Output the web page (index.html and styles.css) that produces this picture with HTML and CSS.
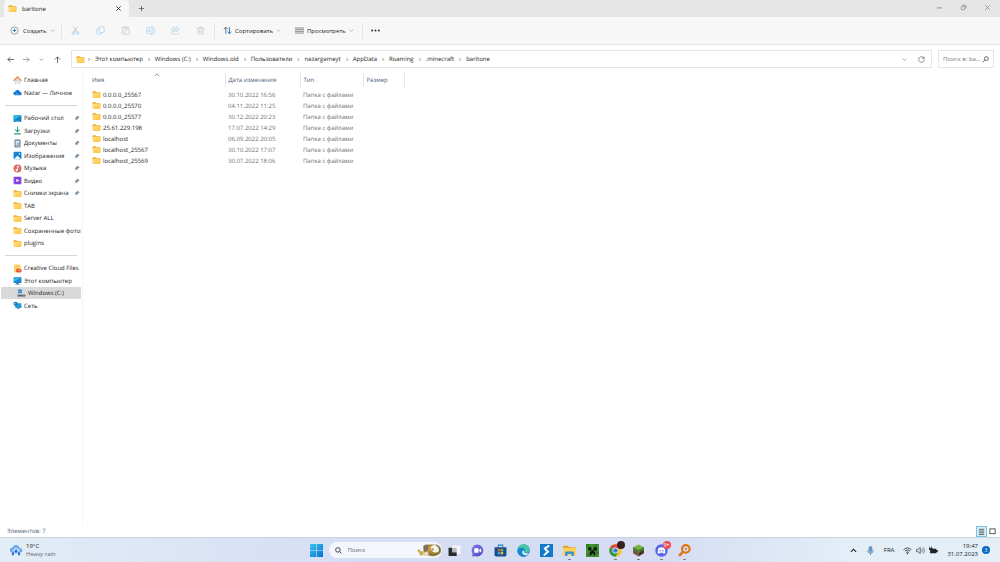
FILE: index.html
```html
<!DOCTYPE html>
<html lang="ru">
<head>
    <meta charset="UTF-8">
    <meta name="viewport" content="width=device-width, initial-scale=1.0">
    <title>baritone</title>
    <link rel="stylesheet" href="styles.css">
</head>
<body>
    <svg class="sprite" aria-hidden="true">
        <linearGradient id="gFolder" x1="0" y1="0" x2="1" y2="1"><stop offset="0" stop-color="#ffe08a"/><stop offset="1" stop-color="#fcc43c"/></linearGradient>
        <linearGradient id="gWin" x1="0" y1="0" x2="1" y2="1"><stop offset="0" stop-color="#3cc4f5"/><stop offset="1" stop-color="#0872cf"/></linearGradient>
        <linearGradient id="gEdge" x1="0" y1="0" x2="1" y2="1"><stop offset="0" stop-color="#2bb6e8"/><stop offset="1" stop-color="#0c59a4"/></linearGradient>
        <linearGradient id="gChat" x1="0" y1="0" x2="1" y2="1"><stop offset="0" stop-color="#7f7bf0"/><stop offset="1" stop-color="#5040b4"/></linearGradient>
        <symbol id="folder" viewBox="0 0 16 16"><path d="M1 3.500Q1 2 2.500 2H6l2 2h5.500Q15 4 15 5.500V8H1z" fill="#eba71c"/><rect x="1" y="5" width="14" height="9" rx="1.200" fill="url(#gFolder)"/></symbol>
        <symbol id="chevron" viewBox="0 0 8 8"><path d="M3 1.500L5.500 4 3 6.500" fill="none" stroke="currentColor" stroke-width="1.200"/></symbol>
        <symbol id="down" viewBox="0 0 8 8"><path d="M1 2.500l3 3 3-3" fill="none" stroke="currentColor"/></symbol>
        <symbol id="up" viewBox="0 0 8 8"><path d="M1 5.500l3-3 3 3" fill="none" stroke="currentColor" stroke-width="1.200"/></symbol>
        <symbol id="close" viewBox="0 0 8 8"><path d="M1.500 1.500l5 5M6.500 1.500l-5 5" fill="none" stroke="currentColor" stroke-width=".9"/></symbol>
        <symbol id="pin" viewBox="0 0 12 12"><path d="M7 1l4 4-1 .8-.7-.2L7.200 7.700 7 9.500 5.800 10.200 3.900 8.300 1.500 11l-.5-.5L3.400 8 1.800 6.200 2.500 5l1.800-.2 2.100-2.100L6.200 2z" fill="#7b8b98"/></symbol>
        <symbol id="monitor" viewBox="0 0 16 16"><rect x="1" y="2" width="14" height="10.500" rx="1" fill="#1687ce"/><path d="M2 3h12L2 10z" fill="#37b7e9"/><path d="M6 12h4v2h2v1H4v-1h2z" fill="#2a6594"/></symbol>
    </svg>

    <div class="window">
        <header class="titlebar">
            <div class="tab">
                <svg class="icon"><use href="#folder"/></svg>
                <span>baritone</span>
                <button class="tab-close" aria-label="Закрыть вкладку"><svg class="icon-s"><use href="#close"/></svg></button>
            </div>
            <button class="new-tab" aria-label="Новая вкладка"><svg class="icon-s" viewBox="0 0 8 8"><path d="M4 1v6M1 4h6" stroke="#555" stroke-width=".9"/></svg></button>
            <div class="caption">
                <button aria-label="Свернуть"><svg class="icon-s" viewBox="0 0 8 8"><path d="M1 4.500h6" stroke="#888"/></svg></button>
                <button aria-label="Восстановить"><svg class="icon-s" viewBox="0 0 8 8"><g fill="none" stroke="#888" stroke-width=".9"><rect x="1.500" y="2.500" width="4" height="4" rx=".7"/><path d="M3 1.300h2.700Q6.800 1.300 6.800 2.500V5"/></g></svg></button>
                <button aria-label="Закрыть"><svg class="icon-s"><use href="#close"/></svg></button>
            </div>
        </header>

        <div class="toolbar">
            <button class="create">
                <svg class="icon" viewBox="0 0 16 16"><circle cx="8" cy="8" r="6.500" fill="none" stroke="#666"/><path d="M8 5v6M5 8h6" stroke="#1a80cc" stroke-width="1.700"/></svg>
                <span>Создать</span><svg class="arrow"><use href="#down"/></svg>
            </button>
            <div class="tools">
                <button aria-label="Вырезать"><svg class="icon" viewBox="0 0 16 16"><path d="M4 1l6.500 10M12 1L5.500 11" stroke="#aaa" fill="none"/><g fill="none" stroke="#9bcbea" stroke-width="1.300"><circle cx="4" cy="12.500" r="2.200"/><circle cx="12" cy="12.500" r="2.200"/></g></svg></button>
                <button aria-label="Копировать"><svg class="icon" viewBox="0 0 16 16"><g fill="none" stroke="#a5d0ed" stroke-width="1.300"><rect x="5.500" y="1.500" width="9" height="10" rx="2"/><path d="M5 4H3.500Q1.500 4 1.500 6v6.500q0 2 2 2H8q2 0 2.500-2"/></g></svg></button>
                <button aria-label="Вставить"><svg class="icon" viewBox="0 0 16 16"><g fill="none" stroke-width="1.200"><path d="M6 14.500H2.500V3H5m6 0h2.500v3M5 1.500h6v2H5z" stroke="#c4c4c4"/><rect x="7" y="6.500" width="7.500" height="8.500" rx="1" stroke="#a5d0ed"/></g></svg></button>
                <button aria-label="Переименовать"><svg class="icon" viewBox="0 0 16 16"><g fill="none" stroke="#a5d0ed" stroke-width="1.200"><path d="M9 3H2.500Q1 3 1 4.500v7Q1 13 2.500 13H9M12.500 3q2.500 0 2.500 1.500v7q0 1.500-2.500 1.500M9 1h3.500M9 15h3.500M10.800 1v14M3.300 10.500L5.500 5l2.200 5.500M4 9h3"/></g></svg></button>
                <button aria-label="Поделиться"><svg class="icon" viewBox="0 0 16 16"><path d="M7 2.500H3.500q-2 0-2 2v8q0 2 2 2h8q2 0 2-2V11" fill="none" stroke="#c4c4c4"/><path d="M9.500 1.500L15 6l-5.500 4V7.500Q6 7 4 11q0-7 5.500-7z" fill="none" stroke="#9bcbea" stroke-width="1.200"/></svg></button>
                <button aria-label="Удалить"><svg class="icon" viewBox="0 0 16 16"><path d="M1.500 4h13M6 4V2h4v2M3 4l1 10.500h8L13 4M6.500 7v5M9.500 7v5" fill="none" stroke="#c0c0c0" stroke-width="1.200"/></svg></button>
            </div>
            <button class="sort">
                <svg class="icon" viewBox="0 0 16 16"><path d="M5 14V2M1.500 6L5 2l3.500 4" fill="none" stroke="#555" stroke-width="1.400"/><path d="M11.500 2v12M8.500 10l3 4 3.500-4" fill="none" stroke="#1a80cc" stroke-width="1.600"/></svg>
                <span>Сортировать</span><svg class="arrow"><use href="#down"/></svg>
            </button>
            <button class="view">
                <svg class="icon" viewBox="0 0 16 16"><path d="M0 3.500h16M0 6.500h16M0 9.500h16M0 12.500h16" stroke="#666" stroke-width="1.300"/></svg>
                <span>Просмотреть</span><svg class="arrow"><use href="#down"/></svg>
            </button>
            <button class="more" aria-label="Подробнее"><svg class="icon" viewBox="0 0 16 16"><g fill="#333"><circle cx="2" cy="8" r="1.800"/><circle cx="8" cy="8" r="1.800"/><circle cx="14" cy="8" r="1.800"/></g></svg></button>
        </div>

        <div class="navbar">
            <div class="history">
                <button aria-label="Назад"><svg class="icon-s" viewBox="0 0 8 8"><path d="M8 4H1M4 1L1 4l3 3" fill="none" stroke="#555"/></svg></button>
                <button aria-label="Вперед"><svg class="icon-s" viewBox="0 0 8 8"><path d="M0 4h7M4 1l3 3-3 3" fill="none" stroke="#999"/></svg></button>
                <button aria-label="Последние"><svg class="arrow"><use href="#down"/></svg></button>
                <button aria-label="Вверх"><svg class="icon-s" viewBox="0 0 8 8"><path d="M4 8V1M1 4l3-3 3 3" fill="none" stroke="#555"/></svg></button>
            </div>
            <nav class="address">
                <svg class="icon"><use href="#folder"/></svg>
                <svg class="chevron"><use href="#chevron"/></svg><a href="#">Этот компьютер</a>
                <svg class="chevron"><use href="#chevron"/></svg><a href="#">Windows (C:)</a>
                <svg class="chevron"><use href="#chevron"/></svg><a href="#">Windows.old</a>
                <svg class="chevron"><use href="#chevron"/></svg><a href="#">Пользователи</a>
                <svg class="chevron"><use href="#chevron"/></svg><a href="#">nazargameyt</a>
                <svg class="chevron"><use href="#chevron"/></svg><a href="#">AppData</a>
                <svg class="chevron"><use href="#chevron"/></svg><a href="#">Roaming</a>
                <svg class="chevron"><use href="#chevron"/></svg><a href="#">.minecraft</a>
                <svg class="chevron"><use href="#chevron"/></svg><a href="#">baritone</a>
                <div class="address-end">
                    <button aria-label="Предыдущие папки"><svg class="arrow"><use href="#down"/></svg></button>
                    <button aria-label="Обновить"><svg class="icon-s" viewBox="0 0 8 8"><path d="M6.800 2.500A3.200 3.200 0 1 0 7.200 4M7 .5v2.300H4.800" fill="none" stroke="#777" stroke-width=".9"/></svg></button>
                </div>
            </nav>
            <label class="find">
                <input type="text" placeholder="Поиск в: ba..." aria-label="Поиск в: baritone">
                <svg class="icon-s" viewBox="0 0 8 8"><circle cx="5" cy="3" r="2.200" fill="none" stroke="#555"/><path d="M3.300 4.700L.8 7.200" stroke="#555"/></svg>
            </label>
        </div>

        <div class="content">
            <aside class="sidebar">
                <ul>
                    <li><a href="#"><svg class="icon" viewBox="0 0 16 16"><path d="M3 7l5-5 5 5v7.500h-3.500V10h-3v4.500H3z" fill="#d7dade"/><path d="M.8 8.500L8 1.500l7.200 7" fill="none" stroke="#e8813c" stroke-width="2"/></svg><span>Главная</span></a></li>
                    <li><a href="#"><svg class="icon" viewBox="0 0 16 16"><path d="M3.500 13Q.3 12.500.5 9.500.8 7 3.500 6.800 5 3 8.500 3.500q3 .4 3.800 3.500 3.200.3 3.200 3 0 3-3 3z" fill="#1473cc"/><path d="M5 7l8 5.500H4z" fill="#2a9df0"/></svg><span>Nazar — Личное</span></a></li>
                </ul>
                <hr>
                <ul>
                    <li><a href="#"><svg class="icon" viewBox="0 0 16 16"><rect x="1" y="2" width="14" height="12" rx="1.500" fill="#1185cc"/><path d="M1 3.500Q1 2 2.500 2H15L1 11z" fill="#31b5dd"/><path d="M4 13h8" stroke="#c6eafb"/></svg><span>Рабочий стол</span></a><svg class="pin"><use href="#pin"/></svg></li>
                    <li><a href="#"><svg class="icon" viewBox="0 0 16 16"><path d="M8 1v9M4 6.500l4 4 4-4M2 14h12" fill="none" stroke="#25a583" stroke-width="1.800"/></svg><span>Загрузки</span></a><svg class="pin"><use href="#pin"/></svg></li>
                    <li><a href="#"><svg class="icon" viewBox="0 0 16 16"><rect x="2.500" y="1" width="11" height="14" rx="1.500" fill="#718ba5"/><path d="M5 4h6v2H5zM5 8h2.500v2H5zM9 8.500h2.500M9 10.500h2.500M5 12.500h6.500" fill="#eef5fa" stroke="#eef5fa"/></svg><span>Документы</span></a><svg class="pin"><use href="#pin"/></svg></li>
                    <li><a href="#"><svg class="icon" viewBox="0 0 16 16"><rect x="1" y="1.500" width="14" height="13" rx="1.500" fill="#1483d3"/><path d="M2 14l6-6 6 6z" fill="#e8f6ff"/><circle cx="11.500" cy="5" r="1.300" fill="#fff"/></svg><span>Изображения</span></a><svg class="pin"><use href="#pin"/></svg></li>
                    <li><a href="#"><svg class="icon" viewBox="0 0 16 16"><circle cx="8" cy="8" r="7" fill="#dc6962"/><path d="M8 11V4l3 1.500" fill="none" stroke="#fff" stroke-width="1.500"/><circle cx="6.500" cy="11" r="1.900" fill="#fff"/></svg><span>Музыка</span></a><svg class="pin"><use href="#pin"/></svg></li>
                    <li><a href="#"><svg class="icon" viewBox="0 0 16 16"><rect x="1" y="1.500" width="14" height="13" rx="1.500" fill="#8340d8"/><path d="M6 5l5 3-5 3z" fill="#fff"/><path d="M2.800 3v11M13.200 3v11" stroke="#bd91f5" stroke-dasharray="1.500 1.500"/></svg><span>Видео</span></a><svg class="pin"><use href="#pin"/></svg></li>
                    <li><a href="#"><svg class="icon"><use href="#folder"/></svg><span>Снимки экрана</span></a><svg class="pin"><use href="#pin"/></svg></li>
                    <li><a href="#"><svg class="icon"><use href="#folder"/></svg><span>TAB</span></a></li>
                    <li><a href="#"><svg class="icon"><use href="#folder"/></svg><span>Server ALL</span></a></li>
                    <li><a href="#"><svg class="icon"><use href="#folder"/></svg><span>Сохраненные фотог</span></a></li>
                    <li><a href="#"><svg class="icon"><use href="#folder"/></svg><span>plugins</span></a></li>
                </ul>
                <hr>
                <ul>
                    <li><a href="#"><svg class="icon" viewBox="0 0 16 16"><path d="M2 1h9l3 3v11H2z" fill="#fbce66"/><circle cx="9" cy="11.500" r="3.500" fill="#e24b28"/><circle cx="12.500" cy="12" r="3" fill="#e24b28"/><path d="M8 11.500q1.500-2 3 0t3 0" fill="none" stroke="#fff"/></svg><span>Creative Cloud Files</span></a></li>
                    <li><a href="#"><svg class="icon"><use href="#monitor"/></svg><span>Этот компьютер</span></a></li>
                    <li class="selected"><a href="#"><svg class="icon" viewBox="0 0 16 16"><path d="M2 1h3v3H2zM5.500 1h3v3h-3zM2 4.500h3v3H2zM5.500 4.500h3v3h-3z" fill="#1683d8"/><path d="M1 10h14v3.500H1z" fill="#5c6670"/><path d="M11 12h2.500" stroke="#8de0d0"/></svg><span>Windows (C:)</span></a></li>
                    <li><a href="#"><svg class="icon" viewBox="0 0 16 16"><rect x="4" y="4" width="11" height="8.500" rx="1" fill="#2598d8"/><path d="M8 12h3v2H8z" fill="#356b8f"/><circle cx="4.500" cy="5" r="3.800" fill="#1676ba"/><path d="M2 4l2-1 1 2-2 2zM6 5l1.500 1" fill="#72d0ec"/></svg><span>Сеть</span></a></li>
                </ul>
            </aside>

            <main class="files">
                <table>
                    <colgroup><col class="c-name"><col class="c-date"><col class="c-type"><col class="c-size"></colgroup>
                    <thead>
                        <tr><th>Имя<svg class="sorted"><use href="#up"/></svg></th><th>Дата изменения</th><th>Тип</th><th>Размер</th></tr>
                    </thead>
                    <tbody>
                        <tr><td><a href="#"><svg class="icon"><use href="#folder"/></svg>0.0.0.0_25567</a></td><td>30.10.2022 16:56</td><td>Папка с файлами</td><td></td></tr>
                        <tr><td><a href="#"><svg class="icon"><use href="#folder"/></svg>0.0.0.0_25570</a></td><td>04.11.2022 11:25</td><td>Папка с файлами</td><td></td></tr>
                        <tr><td><a href="#"><svg class="icon"><use href="#folder"/></svg>0.0.0.0_25577</a></td><td>30.12.2022 20:23</td><td>Папка с файлами</td><td></td></tr>
                        <tr><td><a href="#"><svg class="icon"><use href="#folder"/></svg>25.61.229.198</a></td><td>17.07.2022 14:29</td><td>Папка с файлами</td><td></td></tr>
                        <tr><td><a href="#"><svg class="icon"><use href="#folder"/></svg>localhost</a></td><td>06.09.2022 20:05</td><td>Папка с файлами</td><td></td></tr>
                        <tr><td><a href="#"><svg class="icon"><use href="#folder"/></svg>localhost_25567</a></td><td>30.10.2022 17:07</td><td>Папка с файлами</td><td></td></tr>
                        <tr><td><a href="#"><svg class="icon"><use href="#folder"/></svg>localhost_25569</a></td><td>30.07.2022 18:06</td><td>Папка с файлами</td><td></td></tr>
                    </tbody>
                </table>
            </main>
        </div>

        <div class="status">
            <span>Элементов: 7</span>
            <div class="layouts">
                <button class="active" aria-label="Таблица"><svg class="icon-s" viewBox="0 0 8 8"><path d="M1 1.500h6M1 3.500h6M1 5.500h6M1 7.500h6" stroke="#444" stroke-width=".9"/></svg></button>
                <button aria-label="Крупные значки"><svg class="icon-s" viewBox="0 0 8 8"><rect x="1" y="1" width="6" height="5.500" fill="none" stroke="#444"/></svg></button>
            </div>
        </div>
    </div>

    <footer class="taskbar">
        <button class="weather">
            <svg class="icon-w" viewBox="0 0 28 28"><path d="M6 19Q1 18 2 13q1-4 5-4 2-6 8-5 5 1 6 6 5 0 6 5 0 4-5 4z" fill="#69a5ec"/><path d="M7 17q-1-4 3-5 3-5 7-1 4 0 5 6z" fill="#bfd9f9"/><path d="M14 13q4 5 0 6.500Q10 18 14 13zM8 18q4 5 0 6.500Q4 23 8 18zM20 18q4 5 0 6.500Q16 23 20 18z" fill="#1663df" stroke="#1663df"/></svg>
            <span>19°C<small>Heavy rain</small></span>
        </button>

        <div class="apps">
            <button aria-label="Пуск"><svg class="icon-t" viewBox="0 0 24 24"><path d="M0 0h11.400v11.400H0zM12.600 0H24v11.400H12.600zM0 12.600h11.400V24H0zM12.600 12.600H24V24H12.600z" fill="url(#gWin)"/></svg></button>
            <label class="search">
                <svg class="icon-s" viewBox="0 0 8 8"><circle cx="3.300" cy="3.300" r="2.600" fill="none" stroke="#333"/><path d="M5.200 5.200l2.300 2.300" stroke="#333"/></svg>
                <input type="text" placeholder="Поиск" aria-label="Поиск">
                <svg class="art" viewBox="0 0 50 26"><path d="M12 6Q13 0 20 1h14q12 0 14 9 1 9-6 12-8 4-16 2l-12-4z" fill="#a3863f"/><path d="M14 4q5-4 9 0l-1 8-8 3z" fill="#7d7068"/><path d="M27 7q2-6 10-5 8 2 8 9-2 7-9 6-8-1-9-10z" fill="#f4f2ea"/><path d="M25 19q9 6 17-1M38 2q9 4 7 15" fill="none" stroke="#76752f" stroke-width="2.500"/><path d="M0 13l5-3 2 4 7 1-2 8H6l-2-6z" fill="#c7b154"/><path d="M13 17l9-2 1 9h-9z" fill="#e9d9b5"/><path d="M23 5l5-1-1 9-5 2z" fill="#d4a231"/><circle cx="31" cy="11" r="2.500" fill="#b2925a"/></svg>
            </label>
            <button aria-label="Представление задач"><svg class="icon-t" viewBox="0 0 24 24"><path d="M7 3h16v15H7z" fill="#f7f7f8"/><path d="M1 7h7v8h8v7H1z" fill="#282b2f"/><path d="M8 7h8v8H8z" fill="#b5b8bd"/></svg></button>
            <button aria-label="Чат"><svg class="icon-t" viewBox="0 0 24 24"><path d="M12 1a11 11 0 1 1-5 21L2 23l1-5A11 11 0 0 1 12 1z" fill="url(#gChat)"/><path d="M6 8h8v8H6zM15 11l4-3v8l-4-3z" fill="#fff"/></svg></button>
            <button aria-label="Microsoft Store"><svg class="icon-t" viewBox="0 0 24 24"><path d="M8 6V2h8v4" fill="none" stroke="#237fc4" stroke-width="2"/><path d="M1 6h22v14q0 3-3 3H4q-3 0-3-3z" fill="#174f8e"/><path d="M7 9h4.500v4.500H7z" fill="#f1592a"/><path d="M12.500 9H17v4.500h-4.500z" fill="#80bb32"/><path d="M7 14.500h4.500V19H7z" fill="#30a9e5"/><path d="M12.500 14.500H17V19h-4.500z" fill="#f9bd26"/></svg></button>
            <button aria-label="Edge"><svg class="icon-t" viewBox="0 0 24 24"><circle cx="12" cy="12" r="11.500" fill="url(#gEdge)"/><path d="M1 11Q3 1 13 .6q10 1 10.500 10-.5 6-7 5.500-4-.7-2-4Q13 6 7 7q-4 .6-6 4z" fill="#44c7a2"/><path d="M1 11q4-5 10-4 5 2 3.500 5.500Q8 12 9 18q2 5 8 4.500Q7 26 2.500 18 .5 14 1 11z" fill="#1688cf"/><path d="M14 12q-3 4 3 5 3 1 6-2l-1 2q-3 4-7 4-7-2-5-8z" fill="#dbeafa"/></svg></button>
            <button aria-label="S"><svg class="icon-t" viewBox="0 0 24 24"><path d="M0 0h24v24H0z" fill="#1278ca"/><path d="M17 3l-8 5 6 6-8 7M9 8l3 5" fill="none" stroke="#fff" stroke-width="3.500"/></svg></button>
            <button class="open" aria-label="Проводник"><svg class="icon-t" viewBox="0 0 24 24"><path d="M0 3h9l3 3h12v8H0z" fill="#e5a225"/><path d="M0 7h24v14H0z" fill="#fdd05b"/><path d="M4 22v-6q0-2 2-2h12q2 0 2 2v6h-4v-4H8v4z" fill="#268fdc"/></svg></button>
            <button aria-label="Minecraft"><svg class="icon-t" viewBox="0 0 24 24"><path d="M0 0h24v24H0z" fill="#41932d"/><path d="M0 0h6v5H0zM16 0h5v4h-5zM1 17h5v5H1zM19 14h5v5h-5z" fill="#357a25"/><path d="M4 6h6v6H4zM14 6h6v6h-6zM10 11h4v3h3v7h-3v-3h-4v3H7v-7h3z" fill="#101510"/></svg></button>
            <button class="open" aria-label="Chrome"><svg class="icon-t" viewBox="0 0 24 24"><circle cx="12" cy="12" r="11.500" fill="#f6c51c"/><path d="M12 12L2 6.300A11.500 11.500 0 0 1 22 6.300z" fill="#df4935"/><path d="M12 12L2 6.300a11.500 11.500 0 0 0 10 17.200l5-8.500z" fill="#27994a"/><circle cx="12" cy="12" r="5.500" fill="#fff"/><circle cx="12" cy="12" r="4.300" fill="#3779df"/></svg><i class="badge dark"></i></button>
            <button class="open" aria-label="Minecraft Launcher"><svg class="icon-t" viewBox="0 0 24 24"><path d="M12 1l10 5-10 5L2 6z" fill="#78b445"/><path d="M2 6l10 5v12L2 17z" fill="#76543b"/><path d="M22 6l-10 5v12l10-6z" fill="#453326"/><path d="M2 6l10 5 10-5v4l-3 3-2-1-2 3-3 1-3-3-3 1-4-5z" fill="#48852e"/></svg></button>
            <button class="open" aria-label="Discord"><svg class="icon-t" viewBox="0 0 24 24"><circle cx="12" cy="12" r="11.500" fill="#5865e8"/><path d="M7 7q5-2 10 0 3 5 2 10l-3 1-1-2H9l-1 2-3-1Q4 12 7 7z" fill="#fff"/><circle cx="9.500" cy="12.500" r="1.500" fill="#5865e8"/><circle cx="14.500" cy="12.500" r="1.500" fill="#5865e8"/></svg><span class="badge">9+</span></button>
            <button class="open" aria-label="Поиск файлов"><svg class="icon-t" viewBox="0 0 24 24"><circle cx="14.500" cy="9" r="7" fill="none" stroke="#e17312" stroke-width="4"/><path d="M9.500 14L2 22" stroke="#e17312" stroke-width="4.500"/><circle cx="14.500" cy="9" r="2" fill="#e17312"/></svg></button>
        </div>

        <div class="tray">
            <button aria-label="Скрытые значки"><svg class="icon-s"><use href="#up"/></svg></button>
            <button aria-label="Микрофон"><svg class="icon" viewBox="0 0 16 16"><rect x="5.500" y="1" width="5" height="9" rx="2.500" fill="#6b9ed3" stroke="#34699d"/><path d="M3 7.500q0 5 5 5t5-5M8 12.500V16" fill="none" stroke="#34699d" stroke-width="1.300"/></svg></button>
            <button class="lang">FRA</button>
            <button class="system" aria-label="Сеть, звук, батарея">
                <svg class="icon" viewBox="0 0 16 16"><path d="M1 6.500q7-6 14 0M3.500 9q4.500-4 9 0M5.800 11.500q2.200-2 4.400 0" fill="none" stroke="#333" stroke-width="1.500"/><circle cx="8" cy="13.500" r="1.300" fill="#333"/></svg>
                <svg class="icon" viewBox="0 0 16 16"><path d="M1 6h2.500L7.500 2.500v11L3.500 10H1z" fill="none" stroke="#333" stroke-width="1.200"/><path d="M9.500 6q1.500 2 0 4M11.500 4q3 4 0 8M13.500 2.500q4 5.500 0 11" fill="none" stroke="#555"/></svg>
                <svg class="icon" viewBox="0 0 16 16"><path d="M2 5h11v8H2zM13 7h2.500v4H13z" fill="#222"/><path d="M1 1v4M4.500 1v4M0 4h6v2.500H0z" fill="#222" stroke="#222"/></svg>
            </button>
            <button class="clock"><time>19:47</time><time>31.07.2023</time></button>
            <button class="notes" aria-label="Уведомления">3</button>
        </div>
    </footer>
</body>
</html>
```
FILE: styles.css
```css
:root {
    --text: #1c1c1c;
    --muted: #707070;
    --head: #4c607a;
    --line: #e5e5e5;
    --bar: #f7f7f7;
}

* {
    margin: 0;
    padding: 0;
    box-sizing: border-box;
}

body {
    display: flex;
    flex-direction: column;
    height: 100vh;
    overflow: hidden;
    font-family: 'Open Sans', 'Noto Sans', sans-serif;
    font-size: 6px;
    line-height: 8px;
    text-rendering: geometricPrecision;
    color: var(--text);
    background: #fff;
}

button {
    display: flex;
    align-items: center;
    justify-content: center;
    border: none;
    background: none;
    font: inherit;
    color: inherit;
}

a {
    color: inherit;
    text-decoration: none;
}

ul {
    list-style: none;
}

input {
    min-width: 0;
    flex: 1;
    border: none;
    outline: none;
    background: none;
    font: inherit;
}

svg {
    display: block;
    flex: none;
}

.sprite {
    position: absolute;
    width: 0;
    height: 0;
}

.icon {
    width: 9px;
    height: 9px;
}

.icon-s {
    width: 7px;
    height: 7px;
}

.arrow {
    width: 5px;
    height: 5px;
}

.window {
    display: flex;
    flex-direction: column;
    flex: 1;
    min-height: 0;
}

/* Title bar */
.titlebar {
    display: flex;
    height: 17px;
    padding-left: 4px;
    background: #e6e6e6;
}

.tab {
    display: flex;
    align-items: center;
    gap: 5px;
    width: 125px;
    padding: 0 7px 0 4px;
    border-radius: 4px 4px 0 0;
    background: var(--bar);
}

.tab-close {
    margin-left: auto;
}

.new-tab {
    width: 25px;
}

.caption {
    display: flex;
    margin-left: auto;
    padding-right: 1px;
    color: #888;
}

.caption button {
    width: 24px;
    height: 15px;
}

/* Toolbar */
.toolbar {
    display: flex;
    align-items: center;
    height: 28px;
    padding-left: 10px;
    background: var(--bar);
    border-bottom: 1px solid var(--line);
}

.toolbar .arrow {
    color: #999;
}

.create,
.sort,
.view {
    gap: 3px;
    height: 16px;
}

.create {
    gap: 4px;
    width: 52px;
    justify-content: flex-start;
    border-right: 1px solid var(--line);
}

.tools {
    display: flex;
    border-right: 1px solid var(--line);
    padding: 0 1px;
}

.tools button {
    width: 25px;
    height: 16px;
}

.sort {
    width: 72px;
    justify-content: flex-start;
    margin-left: 8px;
}

.view {
    width: 68px;
    justify-content: flex-start;
    border-right: 1px solid var(--line);
}

.more {
    margin-left: 8px;
}

/* Address row */
.navbar {
    display: flex;
    align-items: center;
    gap: 6px;
    padding: 5px 6px 4px 3px;
}

.history {
    display: flex;
    width: 62px;
    color: #777;
}

.history button {
    width: 16px;
    height: 16px;
}

.address {
    display: flex;
    align-items: center;
    flex: 1;
    gap: 4px;
    height: 18px;
    padding: 0 6px 0 4px;
    border: 1px solid var(--line);
}

.address a {
    white-space: nowrap;
}

.chevron {
    width: 4px;
    height: 5px;
    color: #333;
}

.address .icon {
    margin-right: -2px;
}

.address-end {
    display: flex;
    gap: 11px;
    margin-left: auto;
    color: #777;
}

.find {
    display: flex;
    align-items: center;
    width: 56px;
    height: 18px;
    padding: 0 4px;
    border: 1px solid var(--line);
}

.find ::placeholder {
    color: #777;
}

/* Content */
.content {
    display: flex;
    flex: 1;
    min-height: 0;
}

.sidebar {
    width: 83px;
    padding-top: 2px;
    border-right: 1px solid #f5f5f5;
}

.sidebar li {
    display: flex;
    align-items: center;
    height: 12px;
    margin: 0 1px;
}

.sidebar li:nth-child(even) {
    height: 13px;
}

.sidebar li a {
    display: flex;
    align-items: center;
    flex: 1;
    gap: 2px;
    min-width: 0;
    padding-left: 12px;
    overflow: hidden;
    white-space: nowrap;
}

.sidebar .selected {
    background: #d9d9d9;
}

.sidebar .selected a {
    padding-left: 16px;
}

.sidebar hr {
    margin: 6px 5px;
    border: none;
    border-top: 1px solid #d6d6d6;
}

.pin {
    width: 6px;
    height: 6px;
    margin-right: 1px;
}

.files {
    flex: 1;
    padding-top: 1px;
}

table {
    width: 321px;
    table-layout: fixed;
    border-collapse: collapse;
}

.c-name {
    width: 142px;
}

.c-date {
    width: 75px;
}

.c-type {
    width: 63px;
}

.c-size {
    width: 41px;
}

th {
    position: relative;
    height: 14px;
    padding-left: 3px;
    border-right: 1px solid var(--line);
    font-weight: normal;
    text-align: left;
    color: var(--head);
}

th:first-child {
    padding-left: 9px;
}

.sorted {
    position: absolute;
    top: -1px;
    left: 50%;
    width: 6px;
    height: 6px;
    color: #888;
}

tbody::before {
    display: block;
    height: 2px;
    content: '';
}

td {
    height: 11px;
    padding-left: 3px;
    color: var(--muted);
    white-space: nowrap;
}

td:first-child {
    padding-left: 9px;
    color: var(--text);
}

td a {
    display: flex;
    align-items: center;
    gap: 2px;
}

/* Status bar */
.status {
    display: flex;
    align-items: center;
    height: 12px;
    padding: 0 2px 0 7px;
    color: var(--head);
}

.layouts {
    display: flex;
    margin-left: auto;
}

.layouts button {
    width: 11px;
    height: 11px;
}

.layouts .active {
    border: 1px solid #78c1e6;
    background: #d5edf9;
}

/* Taskbar */
.taskbar {
    display: grid;
    grid-template-columns: 1fr auto 1fr;
    align-items: center;
    height: 25px;
    border-top: 1px solid #ccd3dc;
    background: linear-gradient(90deg, #e2edf7, #d5def4 35%, #d5dcf3 65%, #e3eef7 85%);
}

.weather {
    justify-self: start;
    gap: 3px;
    padding-left: 9px;
    text-align: left;
}

.weather small {
    display: block;
    font-size: 6px;
    color: #666;
}

.icon-w {
    width: 14px;
    height: 14px;
}

.icon-t {
    width: 13px;
    height: 13px;
}

.apps {
    display: flex;
    align-items: center;
}

.apps button {
    position: relative;
    width: 23px;
    height: 24px;
}

.apps .open::after {
    position: absolute;
    bottom: 2px;
    width: 3px;
    height: 1px;
    border-radius: 1px;
    background: #777;
    content: '';
}

.search {
    display: flex;
    align-items: center;
    gap: 6px;
    width: 113px;
    height: 16px;
    margin: 0 1px;
    padding-left: 6px;
    border-radius: 8px;
    background: #f3f6fd;
    overflow: hidden;
}

.search ::placeholder {
    color: #666;
}

.art {
    width: 25px;
    height: 13px;
}

.badge {
    position: absolute;
    top: 3px;
    right: 2px;
    width: 8px;
    height: 8px;
    border-radius: 4px;
    background: #ef4b55;
    font-size: 5px;
    line-height: 8px;
    text-align: center;
    color: #fff;
}

.badge.dark {
    background: #332124;
}

.tray {
    display: flex;
    align-items: center;
    justify-self: end;
    gap: 9px;
    padding-right: 10px;
}

.system {
    gap: 4px;
}

.clock {
    flex-direction: column;
    align-items: flex-end;
}

.notes {
    width: 8px;
    height: 8px;
    margin-left: -5px;
    border-radius: 4px;
    background: #0868c1;
    font-size: 5px;
    color: #fff;
}
```
